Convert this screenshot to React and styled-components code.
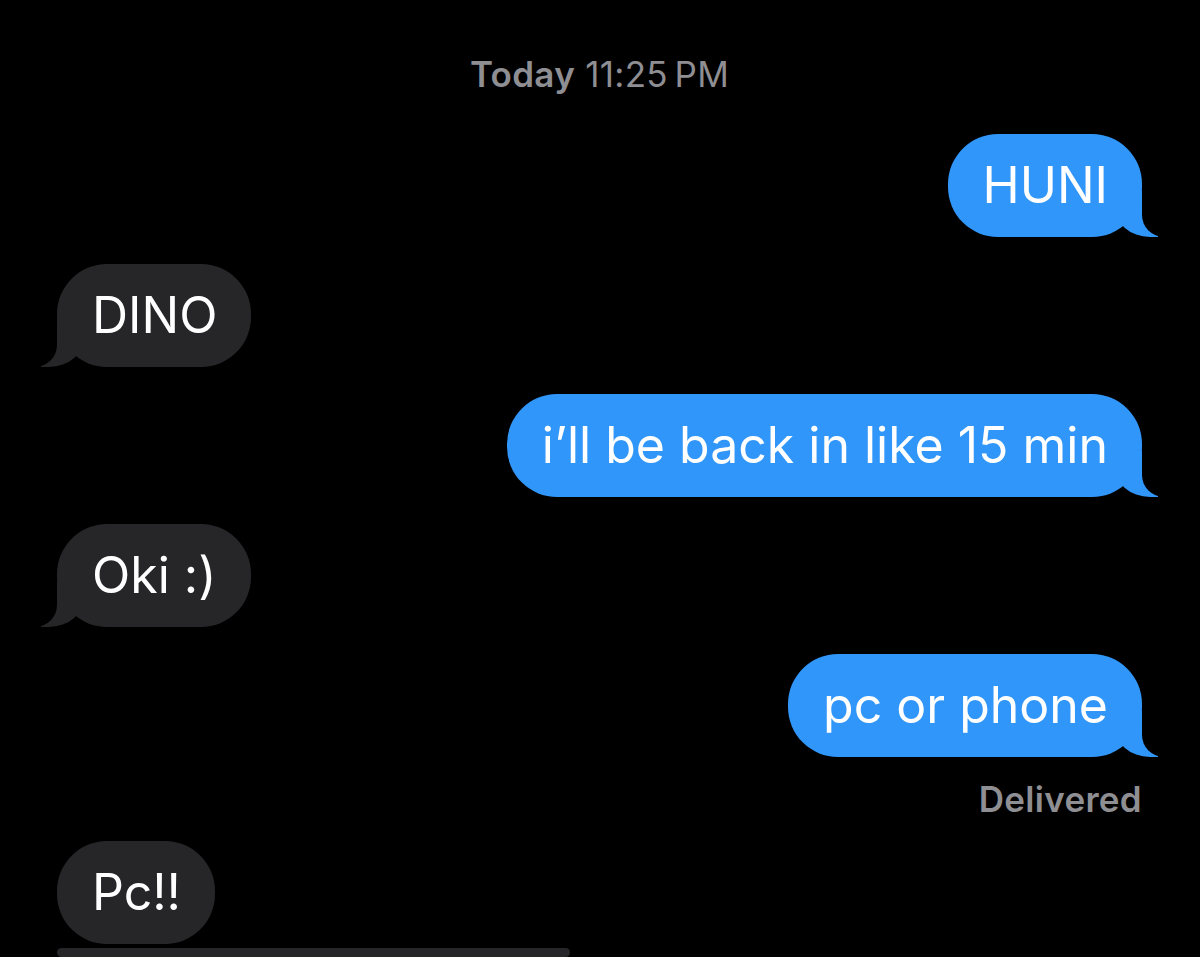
import styled, { createGlobalStyle } from 'styled-components';

const GlobalStyle = createGlobalStyle`
  html, body {
    margin: 0;
    padding: 0;
    background: #000;
    height: 957px;
    overflow: hidden;
  }
`;

const Screen = styled.div`
  width: 1200px;
  height: 957px;
  overflow: hidden;
  background: #000;
  display: flex;
  flex-direction: column;
  padding: 52px 58px 0 57px;
  box-sizing: border-box;
  font-family: Inter, "Liberation Sans", sans-serif;
  -webkit-font-smoothing: antialiased;
`;

const Timestamp = styled.div`
  align-self: center;
  height: 44px;
  line-height: 44px;
  font-size: 35px;
  letter-spacing: 0.3px;
  color: #8e8e93;
  margin-bottom: 38px;

  b {
    font-weight: 600;
  }
`;

const Bubble = styled.div`
  position: relative;
  align-self: ${(p) => (p.$sent ? 'flex-end' : 'flex-start')};
  height: 103px;
  line-height: 103px;
  padding: 0 34px 0 35px;
  margin-top: ${(p) => p.$gap}px;
  border-radius: 50px;
  background: ${(p) => (p.$sent ? '#3196f9' : '#262628')};
  color: #fff;
  font-size: 50px;
  white-space: nowrap;
  box-sizing: border-box;

  &::before,
  &::after {
    content: '';
    display: ${(p) => (p.$tail ? 'block' : 'none')};
    position: absolute;
    bottom: 0;
    height: 46px;
  }

  &::before {
    width: 44px;
    z-index: 0;
    background: ${(p) => (p.$sent ? '#3196f9' : '#262628')};
    ${(p) => (p.$sent
    ? 'right: -16px; border-bottom-left-radius: 36px 32px;'
    : 'left: -16px; border-bottom-right-radius: 36px 32px;')}
  }

  &::after {
    width: 56px;
    z-index: 1;
    background: #000;
    ${(p) => (p.$sent
    ? 'right: -56px; border-bottom-left-radius: 22px;'
    : 'left: -56px; border-bottom-right-radius: 22px;')}
  }
`;

const BubbleText = styled.span`
  position: relative;
  z-index: 2;
`;

const CutBubble = styled(Bubble)`
  width: 513px;
`;

const Status = styled.div`
  align-self: flex-end;
  height: 85px;
  line-height: 84px;
  font-size: 35px;
  font-weight: 600;
  letter-spacing: 0.3px;
  color: #8e8e93;
`;

const messages = [
  { text: 'HUNI', sent: true, tail: true, gap: 0 },
  { text: 'DINO', sent: false, tail: true, gap: 27 },
  { text: 'i\u2019ll be back in like 15 min', sent: true, tail: true, gap: 27 },
  { text: 'Oki :)', sent: false, tail: true, gap: 27 },
  { text: 'pc or phone', sent: true, tail: true, gap: 27 },
];

export default function App() {
  return (
    <Screen>
      <GlobalStyle />
      <Timestamp>
        <b>Today</b> 11:25{'\u2009'}PM
      </Timestamp>
      {messages.map((m) => (
        <Bubble key={m.text} $sent={m.sent} $tail={m.tail} $gap={m.gap}>
          <BubbleText>{m.text}</BubbleText>
        </Bubble>
      ))}
      <Status>Delivered</Status>
      <Bubble $sent={false} $tail={false} $gap={0}>
        <BubbleText>Pc!!</BubbleText>
      </Bubble>
      <CutBubble $sent={false} $tail={false} $gap={4} />
    </Screen>
  );
}
